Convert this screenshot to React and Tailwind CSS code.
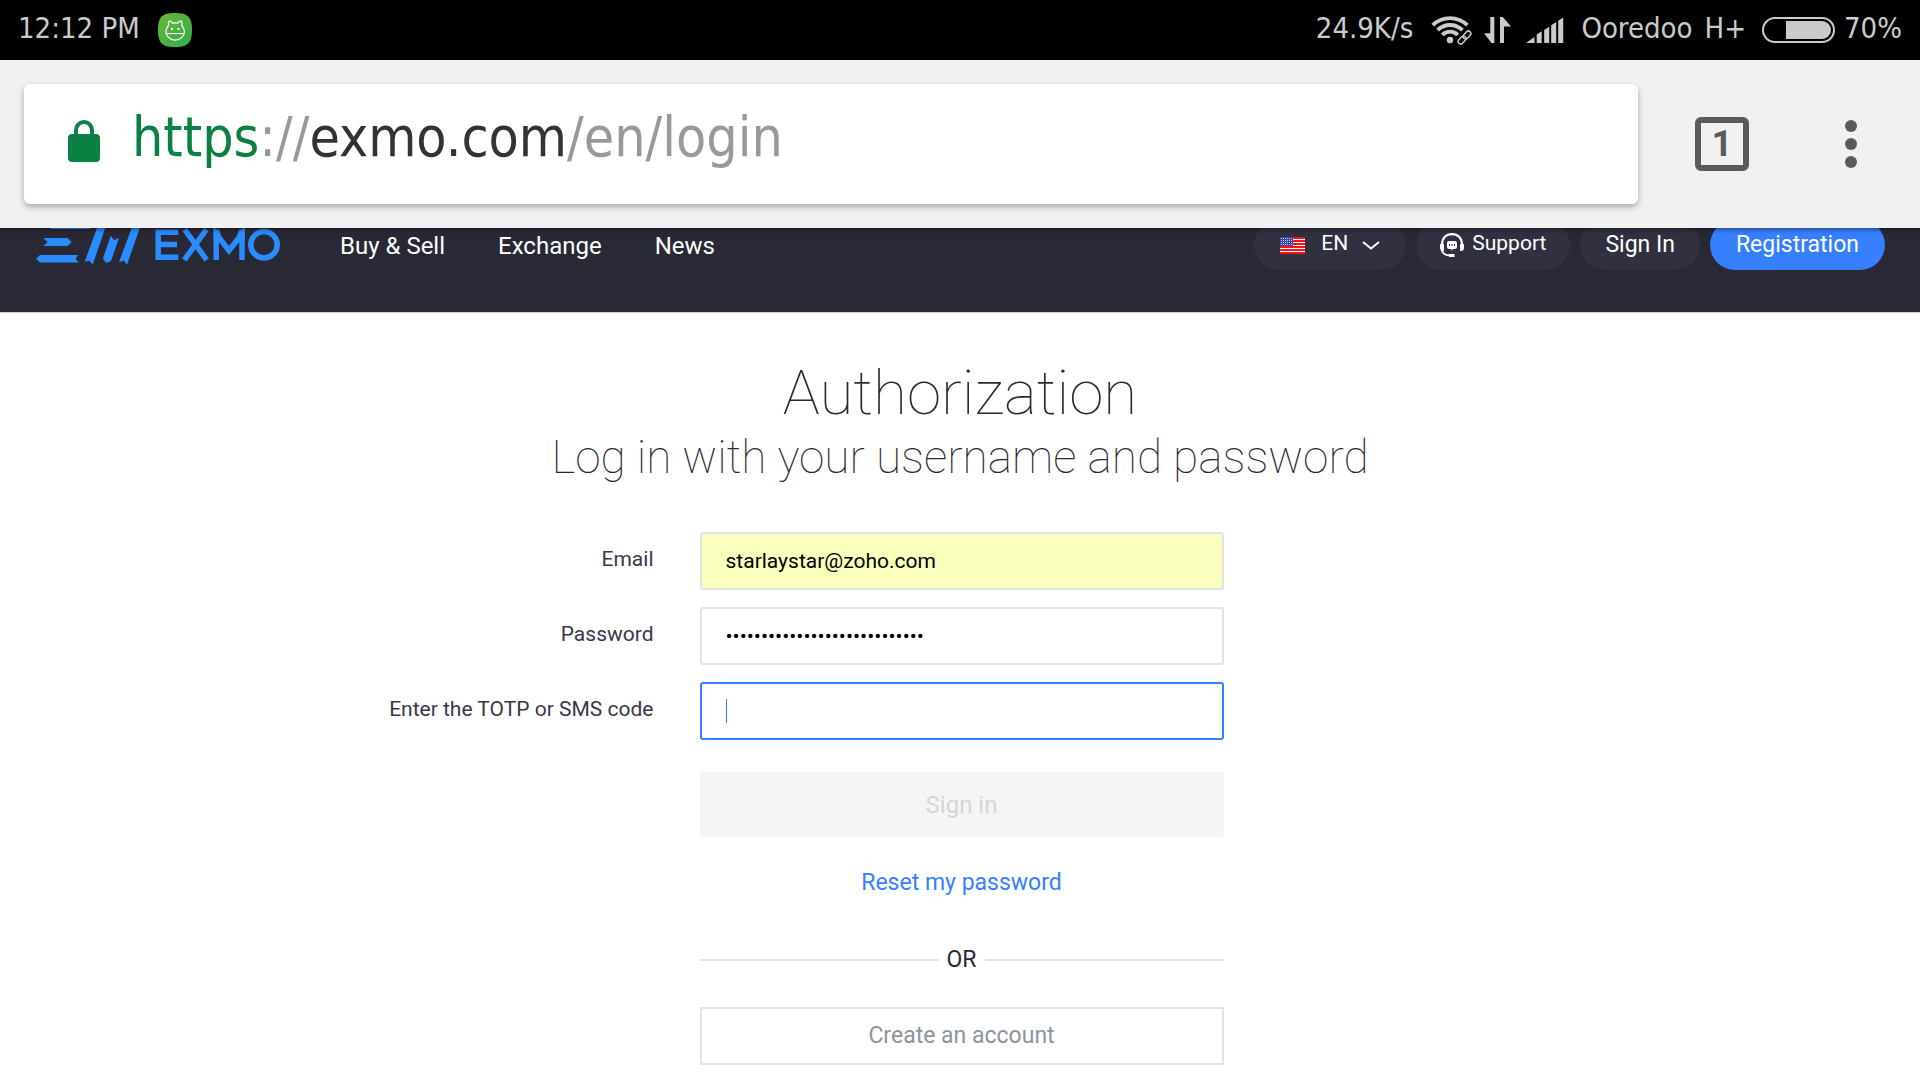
import React, { useState } from 'react';

const StatusBar = () => (
  <div className="flex h-[60px] items-center justify-between bg-black px-[18px] font-['DejaVu_Sans_Condensed','DejaVu_Sans',sans-serif] text-[29px] leading-[32px] text-[#cbcbcb]">
    <div className="flex items-center gap-[18px]">
      <span className="pb-1">12:12 PM</span>
      <svg className="h-[34px] w-[34px]" viewBox="0 0 34 34" fill="none" aria-hidden="true">
        <defs>
          <linearGradient id="appGreen" x1="0" y1="0" x2="1" y2="1">
            <stop offset="0" stopColor="#6cb53c" />
            <stop offset="1" stopColor="#2fae45" />
          </linearGradient>
        </defs>
        <path d="M17 0C29 0 34 3 34 17S29 34 17 34 0 31 0 17 5 0 17 0Z" fill="url(#appGreen)" />
        <g stroke="#fff" strokeWidth="1.2" strokeLinejoin="round">
          <path d="M10.5 12.5V8.5L12.3 7.8 14.5 10.2Q17 9.5 19.8 10.2L22 7.8 23.8 8.5V12.5Q26.5 15.5 26.5 19A9.4 9 0 0 1 7.8 19Q7.8 15.5 10.5 12.5ZM7.8 20.5H26.4" />
        </g>
        <path d="M13 15h2v2h-2zM19.5 15h2v2h-2z" fill="#fff" />
      </svg>
    </div>
    <div className="flex items-center">
      <span className="pb-1">24.9K/s</span>
      <svg className="ml-[18px] h-8 w-[42px]" viewBox="0 0 42 32" fill="none" aria-hidden="true">
        <g stroke="#cbcbcb" strokeWidth="3.8">
          <path d="M1.7 11.2A24.5 24.5 0 0 1 36.3 11.2" />
          <path d="M6.6 16.1A17.6 17.6 0 0 1 31.4 16.1" />
          <path d="M11.3 20.8A10.9 10.9 0 0 1 26.7 20.8" />
        </g>
        <circle cx="19" cy="26" r="3.2" fill="#cbcbcb" />
        <g stroke="#cbcbcb" strokeWidth="1.5" transform="rotate(-46 33.5 23.5)">
          <rect x="25.5" y="21" width="9" height="5" rx="2.5" stroke="#000" strokeWidth="4" />
          <rect x="32.5" y="21" width="9" height="5" rx="2.5" stroke="#000" strokeWidth="4" />
          <rect x="25.5" y="21" width="9" height="5" rx="2.5" />
          <rect x="32.5" y="21" width="9" height="5" rx="2.5" />
        </g>
      </svg>
      <svg className="ml-[10px] h-8 w-7" viewBox="0 0 28 32" fill="#cbcbcb" aria-hidden="true">
        <path d="M7.3 3H11.3V29H8.5L1 19.3H7.3ZM17 29V3H19.8L28 12.5H21V29Z" />
      </svg>
      <svg className="ml-[14px] h-8 w-10" viewBox="0 0 40 32" fill="#cbcbcb" aria-hidden="true">
        <path d="M1 29L9.5 23V29ZM11.7 29V20.5L16.7 17.3V29ZM19.2 29V16L24.2 12.8V29ZM26.2 29V11.2L31.2 8V29ZM33.2 29V6.7L38.2 3.5V29Z" />
      </svg>
      <span className="ml-4 pb-1">Ooredoo</span>
      <span className="ml-3 pb-1">H+</span>
      <svg className="ml-4 h-7 w-[74px]" viewBox="0 0 74 28" fill="none" aria-hidden="true">
        <rect x="1" y="2" width="71" height="24" rx="12" stroke="#cbcbcb" strokeWidth="2" />
        <path d="M24 5H60A9 9 0 0 1 60 23H24Z" fill="#cbcbcb" />
      </svg>
      <span className="ml-2 pb-1">70%</span>
    </div>
  </div>
);

const BrowserBar = () => (
  <div className="relative z-10 flex h-[168px] items-center bg-[#f1f1f1] pr-[63px] pl-6 shadow-[0_1px_5px_rgba(0,0,0,0.5)]">
    <div className="flex h-[120px] flex-1 items-center rounded-md bg-white pb-[6px] pl-11 shadow-[0_3px_6px_rgba(0,0,0,0.3)]">
      <svg className="h-[42px] w-8" viewBox="0 0 32 42" aria-hidden="true">
        <path d="M8 16V10a8 8 0 0 1 16 0V16" fill="none" stroke="#0b8043" strokeWidth="4" />
        <rect y="14" width="32" height="28" rx="4" fill="#0b8043" />
      </svg>
      <p className="pb-2 pl-8 font-['DejaVu_Sans_Condensed','DejaVu_Sans',sans-serif] text-[55px] leading-[64px] text-[#999]">
        <span className="text-[#0b8043]">https</span>://<span className="text-[#333]">exmo.com</span>/en/login
      </p>
    </div>
    <button className="ml-[57px] flex h-[54px] w-[54px] items-center justify-center rounded-md border-[6px] border-[#5a5a5a] font-[Roboto,sans-serif] text-[36px] leading-[42px] font-bold text-[#5a5a5a]">
      1
    </button>
    <button aria-label="Menu" className="ml-24 flex flex-col gap-[6px]">
      <span className="h-3 w-3 rounded-full bg-[#5a5a5a]" />
      <span className="h-3 w-3 rounded-full bg-[#5a5a5a]" />
      <span className="h-3 w-3 rounded-full bg-[#5a5a5a]" />
    </button>
  </div>
);

const Logo = () => (
  <svg className="h-14 w-[246px]" viewBox="0 0 246 56" fill="#2b8cff" role="img" aria-label="EXMO">
    <path d="M15 8H54V16H15ZM7.5 25H31.5L35.5 29 31.5 33H7.5L11.5 29ZM4 42H42.5L39.5 45.7 42.5 49.5H4L0 45.7Z" />
    <path d="M63.6 8H71.6L56.7 51.7 53.3 47.7 48.7 48.7ZM74.7 22.7L78 27 83 25 75 48 70 50 67 45.3ZM98.3 8H106.3L91 51.7 88 47.7 83 49Z" />
    <g fill="none" stroke="#2b8cff" strokeWidth="5.5">
      <path d="M142.3 19.2H122.2V44.3H142.3M122 31.5H141" />
      <path d="M148.7 16.5L170.7 47M170.4 16.5L148.3 47" />
      <path d="M180.2 47V21L193 37.5 206 21V47" />
      <circle cx="228" cy="31.7" r="13.2" />
    </g>
    <path d="M177.5 16.5H183L185 22 177.5 26ZM208.7 16.5H203.2L201 22 208.7 26Z" />
  </svg>
);

const Flag = () => (
  <svg className="h-[17px] w-[25px]" viewBox="0 0 25 17" aria-hidden="true">
    <rect width="25" height="17" fill="#f51414" />
    <path d="M0 2.5h25M0 5.5h25M0 8.5h25M0 11.5h25M0 14.5h25" stroke="#fff" strokeWidth="1" />
    <rect width="13" height="9" fill="#3c42ac" />
    <path d="M1 1.5h12M1 3.5h12M1 5.5h12M1 7.5h12" stroke="#c9cbea" strokeWidth="1" strokeDasharray="1 1" />
  </svg>
);

const Headset = () => (
  <svg className="h-6 w-6" viewBox="0 0 24 24" fill="none" aria-hidden="true">
    <path d="M2 12C2 4.500 6.500 1.200 12 1.200S22 4.500 22 12" stroke="#fff" strokeWidth="2.2" />
    <path d="M1.5 17Q3.500 22.500 10 22.500" stroke="#fff" strokeWidth="1.8" />
    <path d="M0 11h4v7H2Q0 17 0 15ZM20 11h4v4Q24 17 22 18h-2zM9 21h5.500v3H9zM9 8h6q2 0 2 2v4q0 2-2 2h-2l-1.500 2v-2H9q-2 0-2-2v-4q0-2 2-2Z" fill="#fff" />
    <path d="M9 11h1v2H9zM11.500 11h1v2h-1zM14 11h1v2h-1z" fill="#302f40" />
  </svg>
);

const SiteHeader = () => (
  <header className="flex h-[85px] justify-between border-b border-[#cfcfd3] bg-[#292835] pr-[35px] pl-9 font-[Roboto,sans-serif] text-[24px] leading-[28px] text-white">
    <div className="flex">
      <a href="#home" className="-mt-[15px]">
        <Logo />
      </a>
      <nav className="flex gap-[53px] pt-1 pl-[58px]">
        <a href="#buy">Buy &amp; Sell</a>
        <a href="#exchange">Exchange</a>
        <a href="#news">News</a>
      </nav>
    </div>
    <div className="-mt-2 flex h-[50px] gap-[10px] text-[23px]">
      <button className="flex items-center rounded-full bg-[#313041] px-[26px] text-[21px]">
        <Flag />
        <span className="pb-1 pl-4">EN</span>
        <svg className="ml-[14px] h-[9px] w-[18px]" viewBox="0 0 18 9" fill="none" stroke="#fff" strokeWidth="2" aria-hidden="true">
          <path d="M1 1L9 7.5 17 1" />
        </svg>
      </button>
      <a href="#support" className="flex items-center gap-2 rounded-full bg-[#313041] px-6 text-[21px]">
        <Headset />
        <span className="pb-1">Support</span>
      </a>
      <a href="#signin" className="flex items-center rounded-full bg-[#313041] px-[25px]">
        Sign In
      </a>
      <a href="#registration" className="flex items-center rounded-full bg-[#367fff] px-[26px]">
        Registration
      </a>
    </div>
  </header>
);

const fields = [
  { id: 'email', label: 'Email', type: 'email', value: 'starlaystar@zoho.com', look: 'border-[#dfe2e8] bg-[#faffbd]' },
  { id: 'password', label: 'Password', type: 'password', value: 'correcthorsebatterystaple12x', look: 'border-[#dfe2e8] bg-white' },
  { id: 'code', label: 'Enter the TOTP or SMS code', type: 'text', value: '', look: 'border-[#367fff] bg-white' },
];

const LoginForm = () => {
  const [values, setValues] = useState(Object.fromEntries(fields.map((f) => [f.id, f.value])));

  return (
    <form className="mx-auto mt-[47px] grid max-w-[1240px] grid-cols-[minmax(0,1fr)_524px_minmax(0,1fr)] gap-x-[46px] pl-[3px]">
      {fields.map((field) => (
        <React.Fragment key={field.id}>
          <label htmlFor={field.id} className="pt-[13px] text-right text-[21px] leading-[28px] whitespace-nowrap text-[#3a374a]">
            {field.label}
          </label>
          <div className={`mb-[17px] flex h-[58px] items-center rounded-[3px] border-2 px-6 ${field.look}`}>
            {/* static caret for the empty code field */}
            {field.id === 'code' && !values.code && <span className="h-6 w-[2px] bg-[#367fff]" />}
            <input
              id={field.id}
              type={field.type}
              value={values[field.id]}
              onChange={(e) => setValues({ ...values, [field.id]: e.target.value })}
              className="w-full bg-transparent text-[21px] leading-[28px] text-black caret-[#367fff] outline-none"
            />
          </div>
          <span />
        </React.Fragment>
      ))}
      <div className="col-start-2 flex flex-col text-center">
        <button type="button" disabled className="mt-[15px] h-[65px] rounded-[3px] bg-[#f4f5f7] text-[24px] leading-[28px] text-[#d5d5d7]">
          Sign in
        </button>
        <a href="#reset" className="mt-8 text-[23px] leading-[28px] text-[#367fff]">
          Reset my password
        </a>
        <div className="mt-[49px] flex items-center gap-2 text-[23px] leading-[28px] text-[#292835]">
          <span className="h-[2px] flex-1 bg-[#dfe2e8]" />
          OR
          <span className="h-[2px] flex-1 bg-[#dfe2e8]" />
        </div>
        <a href="#create" className="mt-[33px] flex h-[58px] items-center justify-center border-2 border-[#dfe2e8] text-[23px] leading-[28px] text-[#8d949e]">
          Create an account
        </a>
      </div>
    </form>
  );
};

export default function App() {
  return (
    <div className="min-h-screen overflow-hidden bg-white font-[Roboto,sans-serif]">
      <StatusBar />
      <BrowserBar />
      <SiteHeader />
      <main className="text-[#292835]">
        <h1 className="mt-11 text-center text-[62px] leading-[72px] font-thin">Authorization</h1>
        <h2 className="text-center text-[46px] leading-[56px] font-thin">Log in with your username and password</h2>
        <LoginForm />
      </main>
    </div>
  );
}
